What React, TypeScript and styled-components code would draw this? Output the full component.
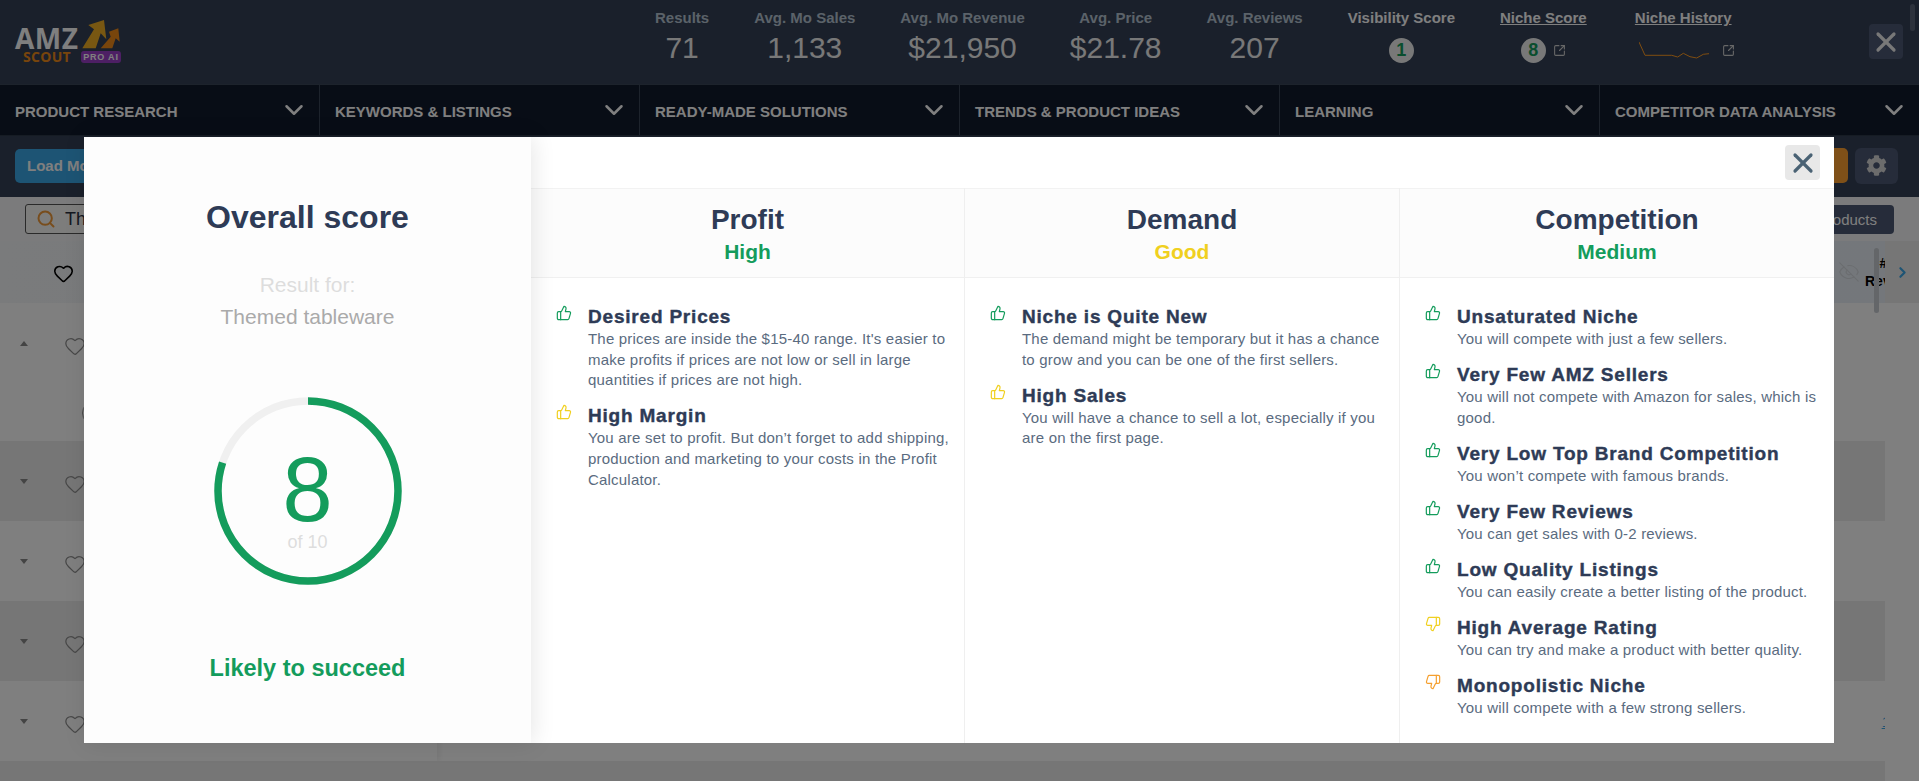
import React from "react";
import styled, { createGlobalStyle } from "styled-components";
import { ChevronDown, ChevronRight, EyeOff, Heart, Search, SquareArrowOutUpRight, ThumbsDown, ThumbsUp, X } from "lucide-react";
import { FaCog } from "react-icons/fa";

const GlobalStyle = createGlobalStyle`
  html, body {
    margin: 0;
    padding: 0;
    background: #fff;
    font-family: "Liberation Sans", Arial, sans-serif;
  }
  * {
    box-sizing: border-box;
  }
`;

const Page = styled.div`
  position: relative;
  width: 1919px;
  height: 781px;
  overflow: hidden;
  display: flex;
  flex-direction: column;
  background: #fff;
`;

const Header = styled.header`
  height: 84px;
  flex: none;
  display: flex;
  background: #344056;
  padding: 20px 16px 0 15px;
  color: #fff;
`;

const Logo = styled.div`
  width: 107px;
  height: 42px;
  display: grid;
  grid-template-columns: 66px 41px;
  grid-template-rows: 32px 10px;
`;

const LogoAmz = styled.span`
  font-family: "Open Sans", sans-serif;
  font-size: 28px;
  line-height: 20px;
  font-weight: 700;
  color: #fff;
  padding-top: 8px;
  letter-spacing: 0.5px;
`;

const LogoScout = styled.span`
  font-family: "Open Sans", sans-serif;
  font-size: 14px;
  line-height: 10px;
  font-weight: 700;
  color: #f08a18;
  padding-left: 8px;
  letter-spacing: 0.3px;
`;

const LogoBadge = styled.span`
  width: 40px;
  height: 12px;
  margin-top: -1px;
  border-radius: 3px;
  background: #9a3fc8;
  color: #fff;
  font-size: 9px;
  line-height: 12px;
  font-weight: 700;
  text-align: center;
  letter-spacing: 0.8px;
`;

const Stats = styled.div`
  display: flex;
  gap: 45px;
  margin-left: 533px;
  margin-top: -12px;
`;

const Stat = styled.div`
  display: flex;
  flex-direction: column;
  align-items: center;
`;

const StatLabel = styled.span<{ $bright?: boolean; $link?: boolean }>`
  font-size: 15px;
  line-height: 20px;
  font-weight: 700;
  white-space: nowrap;
  color: ${(p) => (p.$bright ? "#fff" : "#b6c4d2")};
  text-decoration: ${(p) => (p.$link ? "underline" : "none")};
`;

const StatValue = styled.span`
  font-size: 30px;
  line-height: 36px;
  margin-top: 2px;
  color: #f0f0f0;
`;

const ScoreRow = styled.div`
  display: flex;
  align-items: center;
  gap: 7px;
  height: 30px;
  margin-top: 7px;
  color: #cfcfcf;
`;

const ScoreDot = styled.span`
  width: 25px;
  height: 25px;
  border-radius: 50%;
  background: #f0f0f0;
  color: #149c5c;
  font-size: 18px;
  line-height: 25px;
  font-weight: 700;
  text-align: center;
`;

const SparkSvg = styled.svg`
  margin: 0 5px 0 7px;
`;

const TopClose = styled.button`
  width: 34px;
  height: 35px;
  margin-left: auto;
  margin-top: 4px;
  padding: 0;
  display: flex;
  align-items: center;
  justify-content: center;
  border: 0;
  border-radius: 4px;
  background: #4c5874;
  color: #f0f0f0;
`;

const Thumb = styled.span<{ $top: number; $left: number; $height: number; $color: string }>`
  position: absolute;
  top: ${(p) => p.$top}px;
  left: ${(p) => p.$left}px;
  width: 5px;
  height: ${(p) => p.$height}px;
  border-radius: 3px;
  background: ${(p) => p.$color};
`;

const Nav = styled.nav`
  height: 52px;
  flex: none;
  display: grid;
  grid-template-columns: repeat(6, 320px);
  background: #101a2c;
  border-top: 1px solid #3a4658;
  border-bottom: 1px solid #2c3848;
`;

const NavItem = styled.div`
  display: flex;
  align-items: center;
  justify-content: space-between;
  padding: 0 10px 0 15px;
  border-right: 1px solid #3a4658;
  color: #fff;
  font-size: 15px;
  font-weight: 700;
  text-transform: uppercase;
  white-space: nowrap;
  & > span {
    padding-top: 2px;
  }
`;

const Toolbar = styled.div`
  height: 61px;
  flex: none;
  display: flex;
  align-items: center;
  justify-content: space-between;
  padding: 0 21px 2px 15px;
  background: #344056;
`;

const LoadButton = styled.button`
  height: 34px;
  width: 180px;
  padding: 0 12px;
  border: 0;
  border-radius: 5px;
  background: #3aa8e8;
  color: #fff;
  font: 700 15px "Liberation Sans", sans-serif;
  text-align: left;
`;

const ToolbarRight = styled.div`
  display: flex;
  gap: 7px;
`;

const OrangeButton = styled.div`
  width: 120px;
  height: 35px;
  border-radius: 5px;
  background: #ffa030;
`;

const GearButton = styled.div`
  width: 43px;
  height: 36px;
  display: flex;
  align-items: center;
  justify-content: center;
  border-radius: 6px;
  background: #4c5874;
  color: #d8d8d8;
`;

const SearchRow = styled.div`
  height: 44px;
  flex: none;
  display: flex;
  align-items: center;
  justify-content: space-between;
  padding: 0 25px;
  background: #f6f7f8;
`;

const SearchBox = styled.div`
  width: 300px;
  height: 30px;
  display: flex;
  align-items: center;
  gap: 9px;
  padding-left: 10px;
  border: 1px solid #555;
  border-radius: 3px;
  background: #fbfbf8;
  color: #2a3040;
  font-size: 18px;
  & > svg {
    color: #f09a3a;
  }
`;

const ProductsButton = styled.div`
  height: 29px;
  padding: 0 17px;
  display: flex;
  align-items: center;
  border-radius: 4px;
  background: #4c5874;
  color: #fff;
  font-size: 15px;
`;

const TableHead = styled.div`
  height: 62px;
  flex: none;
  display: flex;
`;

const HeadCells = styled.div`
  width: 1885px;
  display: flex;
  align-items: center;
  padding-left: 53px;
  background: linear-gradient(90deg, #f4f6f8, #e8eff6);
  color: #000;
  overflow: hidden;
`;

const HeartMark = styled.span`
  display: flex;
  padding-top: 2px;
`;

const HeadRight = styled.div`
  margin-left: auto;
  margin-right: -34px;
  display: flex;
  align-items: center;
  gap: 5px;
  color: #d6dae0;
`;

const HeadLabel = styled.span`
  width: 54px;
  color: #000;
  font-size: 14px;
  line-height: 18px;
  font-weight: 700;
  text-align: center;
  white-space: nowrap;
`;

const HeadScroll = styled.div`
  flex: 1;
  display: flex;
  align-items: center;
  justify-content: center;
  background: #ececec;
  color: #3aa8e8;
`;

const Row = styled.div<{ $alt?: boolean; $height: number }>`
  width: 1885px;
  height: ${(p) => p.$height}px;
  flex: none;
  display: flex;
  background: ${(p) => (p.$alt ? "#ececec" : "#fff")};
  overflow: hidden;
`;

const RowLeft = styled.div`
  width: 437px;
  flex: none;
  display: flex;
  align-items: flex-start;
  gap: 36px;
  padding: 32px 0 0 20px;
  box-shadow: 2px 0 6px rgba(0, 0, 0, 0.08);
  color: #909090;
`;

const Caret = styled.span<{ $up?: boolean }>`
  width: 0;
  height: 0;
  margin-top: 6px;
  border-left: 4px solid transparent;
  border-right: 4px solid transparent;
  border-${(p) => (p.$up ? "bottom" : "top")}: 5px solid #888;
`;

const RowAvatar = styled.span`
  width: 24px;
  height: 24px;
  margin: 66px 0 0 -40px;
  border: 1.5px solid #909090;
  border-radius: 50%;
`;

const RowLink = styled.a`
  margin-left: auto;
  margin-right: -5px;
  align-self: center;
  color: #3aa8e8;
  font-size: 15px;
  text-decoration: underline;
`;

const Overlay = styled.div`
  position: absolute;
  inset: 0;
  background: rgba(0, 0, 0, 0.5);
`;

const Modal = styled.div`
  position: absolute;
  top: 137px;
  left: 84px;
  width: 1750px;
  height: 606px;
  display: flex;
  background: #fff;
`;

const ScorePanel = styled.aside`
  width: 447px;
  flex: none;
  display: flex;
  flex-direction: column;
  align-items: center;
  background: #fdfdfd;
  box-shadow: 2px 0 22px rgba(0, 0, 0, 0.1);
  z-index: 1;
`;

const ScoreTitle = styled.h2`
  margin: 62px 0 0;
  font-size: 32px;
  line-height: 36px;
  font-weight: 700;
  color: #2e3b56;
`;

const ResultFor = styled.div`
  margin-top: 38px;
  font-size: 21px;
  line-height: 24px;
  color: #ddd;
`;

const ResultName = styled.div`
  margin-top: 8px;
  font-size: 21px;
  line-height: 24px;
  color: #aaa;
`;

const RingWrap = styled.div`
  width: 188px;
  height: 188px;
  margin-top: 68px;
  display: grid;
  & > * {
    grid-area: 1 / 1;
  }
`;

const RingText = styled.div`
  display: flex;
  flex-direction: column;
  align-items: center;
`;

const RingValue = styled.span`
  margin-top: 56px;
  font-size: 90px;
  line-height: 74px;
  color: #149c5c;
`;

const RingOf = styled.span`
  margin-top: 5px;
  font-size: 18px;
  line-height: 20px;
  color: #ddd;
`;

const Verdict = styled.div`
  margin-top: 68px;
  font-size: 23.5px;
  line-height: 30px;
  font-weight: 700;
  color: #149c5c;
`;

const Details = styled.div`
  flex: 1;
  min-width: 0;
  display: flex;
  flex-direction: column;
`;

const DetailsTop = styled.div`
  height: 51px;
  flex: none;
  display: flex;
  justify-content: flex-end;
  padding: 8px 14px 0 0;
  background: #fff;
`;

const ModalClose = styled.button`
  width: 35px;
  height: 35px;
  padding: 0;
  display: flex;
  align-items: center;
  justify-content: center;
  border: 0;
  border-radius: 4px;
  background: #e8e8e8;
  color: #4a6274;
`;

const Columns = styled.div`
  flex: 1;
  display: grid;
  grid-template-columns: 434px 435px 434px;
`;

const Column = styled.section<{ $last?: boolean }>`
  display: flex;
  flex-direction: column;
  border-right: ${(p) => (p.$last ? "0" : "1px solid #efefef")};
`;

const ColumnHead = styled.div`
  height: 90px;
  flex: none;
  display: flex;
  flex-direction: column;
  align-items: center;
  padding-top: 13px;
  background: #fcfcfc;
  border-top: 1px solid #f2f2f2;
  border-bottom: 1px solid #f0f0f0;
`;

const ColumnTitle = styled.h3`
  margin: 0;
  font-size: 28px;
  line-height: 36px;
  font-weight: 700;
  color: #2e3b56;
`;

const ColumnLevel = styled.div<{ $color: string }>`
  margin-top: 1px;
  font-size: 21px;
  line-height: 26px;
  font-weight: 700;
  color: ${(p) => p.$color};
`;

const ItemList = styled.ul`
  list-style: none;
  margin: 0;
  padding: 26px 14px 0 25px;
`;

const Item = styled.li`
  display: grid;
  grid-template-columns: 32px 1fr;
  margin-bottom: 12.3px;
`;

const ItemIcon = styled.span<{ $color: string }>`
  color: ${(p) => p.$color};
  & > svg {
    display: block;
    margin-top: 1px;
  }
`;

const ItemTitle = styled.div`
  font-size: 19px;
  line-height: 25px;
  font-weight: 700;
  letter-spacing: 0.8px;
  white-space: nowrap;
  color: #2e3b56;
  -webkit-text-stroke: 0.4px #2e3b56;
`;

const ItemText = styled.div`
  font-size: 15px;
  line-height: 20.7px;
  letter-spacing: 0.2px;
  color: #5a6b80;
`;

const GREEN = "#149c5c";
const YELLOW = "#f0d020";
const ORANGE = "#f5a030";

type Point = { title: string; text: string; color: string; down?: boolean };

const columns: { title: string; level: string; color: string; points: Point[] }[] = [
  {
    title: "Profit",
    level: "High",
    color: GREEN,
    points: [
      { title: "Desired Prices", text: "The prices are inside the $15-40 range. It's easier to make profits if prices are not low or sell in large quantities if prices are not high.", color: GREEN },
      { title: "High Margin", text: "You are set to profit. But don’t forget to add shipping, production and marketing to your costs in the Profit Calculator.", color: YELLOW },
    ],
  },
  {
    title: "Demand",
    level: "Good",
    color: YELLOW,
    points: [
      { title: "Niche is Quite New", text: "The demand might be temporary but it has a chance to grow and you can be one of the first sellers.", color: GREEN },
      { title: "High Sales", text: "You will have a chance to sell a lot, especially if you are on the first page.", color: YELLOW },
    ],
  },
  {
    title: "Competition",
    level: "Medium",
    color: GREEN,
    points: [
      { title: "Unsaturated Niche", text: "You will compete with just a few sellers.", color: GREEN },
      { title: "Very Few AMZ Sellers", text: "You will not compete with Amazon for sales, which is good.", color: GREEN },
      { title: "Very Low Top Brand Competition", text: "You won’t compete with famous brands.", color: GREEN },
      { title: "Very Few Reviews", text: "You can get sales with 0-2 reviews.", color: GREEN },
      { title: "Low Quality Listings", text: "You can easily create a better listing of the product.", color: GREEN },
      { title: "High Average Rating", text: "You can try and make a product with better quality.", color: YELLOW, down: true },
      { title: "Monopolistic Niche", text: "You will compete with a few strong sellers.", color: ORANGE, down: true },
    ],
  },
];

const stats = [
  { label: "Results", value: "71" },
  { label: "Avg. Mo Sales", value: "1,133" },
  { label: "Avg. Mo Revenue", value: "$21,950" },
  { label: "Avg. Price", value: "$21.78" },
  { label: "Avg. Reviews", value: "207" },
];

const navItems = ["Product Research", "Keywords & Listings", "Ready-Made Solutions", "Trends & Product Ideas", "Learning", "Competitor Data Analysis"];

const rows = [
  { height: 138, up: true, avatar: true },
  { height: 80, alt: true },
  { height: 80 },
  { height: 80, alt: true },
  { height: 80, link: true },
];

const LogoArrows = () => (
  <svg width="41" height="32" viewBox="0 0 41 32">
    <polygon points="7.3,5 23,0 25.3,19.3 19.7,13.3 14.7,28.3 1.3,28.3 13,9.3" fill="#f0ae24" />
    <polygon points="28,11.7 37.3,8.3 38.7,21.7 34.7,18.3 31.3,28.3 19.7,28.3 29.7,16.7" fill="#f08a18" />
  </svg>
);

const Sparkline = () => (
  <SparkSvg width="71" height="17" viewBox="0 0 71 17">
    <polyline points="0,0 6,13.3 32.7,13.3 38.7,15 44.3,11.3 51,14.7 57.7,16 64.3,12.3 70,11.7" fill="none" stroke="#ff9a20" strokeWidth="1" />
  </SparkSvg>
);

const App: React.FC = () => {
  return (
    <Page>
      <GlobalStyle />
      <Header>
        <Logo>
          <LogoAmz>AMZ</LogoAmz>
          <LogoArrows />
          <LogoScout>SCOUT</LogoScout>
          <LogoBadge>PRO AI</LogoBadge>
        </Logo>
        <Stats>
          {stats.map((s) => (
            <Stat key={s.label}>
              <StatLabel>{s.label}</StatLabel>
              <StatValue>{s.value}</StatValue>
            </Stat>
          ))}
          <Stat>
            <StatLabel $bright>Visibility Score</StatLabel>
            <ScoreRow>
              <ScoreDot>1</ScoreDot>
            </ScoreRow>
          </Stat>
          <Stat>
            <StatLabel $bright $link>Niche Score</StatLabel>
            <ScoreRow>
              <ScoreDot>8</ScoreDot>
              <SquareArrowOutUpRight size={13} />
            </ScoreRow>
          </Stat>
          <Stat>
            <StatLabel $bright $link>Niche History</StatLabel>
            <ScoreRow>
              <Sparkline />
              <SquareArrowOutUpRight size={13} />
            </ScoreRow>
          </Stat>
        </Stats>
        <TopClose>
          <X size={32} strokeWidth={2.4} />
        </TopClose>
      </Header>
      <Nav>
        {navItems.map((item) => (
          <NavItem key={item}>
            <span>{item}</span>
            <ChevronDown size={30} strokeWidth={2} />
          </NavItem>
        ))}
      </Nav>
      <Toolbar>
        <LoadButton>Load More</LoadButton>
        <ToolbarRight>
          <OrangeButton />
          <GearButton>
            <FaCog size={21} />
          </GearButton>
        </ToolbarRight>
      </Toolbar>
      <SearchRow>
        <SearchBox>
          <Search size={20} strokeWidth={2.4} />
          Themed tableware
        </SearchBox>
        <ProductsButton>Saved Products</ProductsButton>
      </SearchRow>
      <TableHead>
        <HeadCells>
          <HeartMark>
            <Heart size={21} strokeWidth={1.8} />
          </HeartMark>
          <HeadRight>
            <EyeOff size={22} strokeWidth={1.2} />
            <HeadLabel>
              # of
              <br />
              Reviews
            </HeadLabel>
          </HeadRight>
        </HeadCells>
        <HeadScroll>
          <ChevronRight size={17} strokeWidth={3} />
        </HeadScroll>
      </TableHead>
      {rows.map((r, i) => (
        <Row key={i} $alt={r.alt} $height={r.height}>
          <RowLeft>
            <Caret $up={r.up} />
            <Heart size={22} strokeWidth={1.4} />
            {r.avatar && <RowAvatar />}
          </RowLeft>
          {r.link && <RowLink>1</RowLink>}
        </Row>
      ))}
      <Row $alt $height={40} />
      <Thumb $top={4} $left={1910} $height={27} $color="#5a6478" />
      <Thumb $top={248} $left={1874} $height={65} $color="#c8ccd2" />
      <Overlay />
      <Modal>
        <ScorePanel>
          <ScoreTitle>Overall score</ScoreTitle>
          <ResultFor>Result for:</ResultFor>
          <ResultName>Themed tableware</ResultName>
          <RingWrap>
            <svg width="188" height="188" viewBox="0 0 188 188">
              <circle cx="94" cy="94" r="90" fill="none" stroke="#f0f0f0" strokeWidth="7.5" />
              <circle cx="94" cy="94" r="90" fill="none" stroke="#149c5c" strokeWidth="7.5" strokeDasharray="452.4 565.5" transform="rotate(-90 94 94)" />
            </svg>
            <RingText>
              <RingValue>8</RingValue>
              <RingOf>of 10</RingOf>
            </RingText>
          </RingWrap>
          <Verdict>Likely to succeed</Verdict>
        </ScorePanel>
        <Details>
          <DetailsTop>
            <ModalClose>
              <X size={32} strokeWidth={2.4} />
            </ModalClose>
          </DetailsTop>
          <Columns>
            {columns.map((c, i) => (
              <Column key={c.title} $last={i === columns.length - 1}>
                <ColumnHead>
                  <ColumnTitle>{c.title}</ColumnTitle>
                  <ColumnLevel $color={c.color}>{c.level}</ColumnLevel>
                </ColumnHead>
                <ItemList>
                  {c.points.map((p) => (
                    <Item key={p.title}>
                      <ItemIcon $color={p.color}>
                        {p.down ? <ThumbsDown size={16} strokeWidth={1.8} /> : <ThumbsUp size={16} strokeWidth={1.8} />}
                      </ItemIcon>
                      <div>
                        <ItemTitle>{p.title}</ItemTitle>
                        <ItemText>{p.text}</ItemText>
                      </div>
                    </Item>
                  ))}
                </ItemList>
              </Column>
            ))}
          </Columns>
        </Details>
      </Modal>
    </Page>
  );
};

export default App;
